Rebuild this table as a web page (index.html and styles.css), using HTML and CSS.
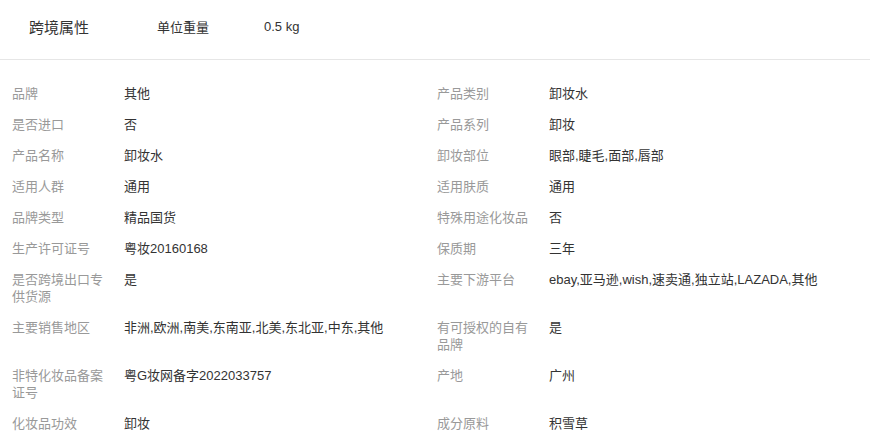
FILE: index.html
```html
<!DOCTYPE html>
<html lang="zh-CN">
<head>
  <meta charset="UTF-8">
  <meta name="viewport" content="width=device-width, initial-scale=1.0">
  <title>商品属性</title>
  <link rel="stylesheet" href="styles.css">
</head>
<body>
  <div class="crossBorder">
    <span class="crossTitle">跨境属性</span>
    <span class="crossLabel">单位重量</span>
    <span class="crossValue">0.5 kg</span>
  </div>

  <div class="attrGrid">
    <div class="attr"><span class="attrName">品牌</span><span class="attrValue">其他</span></div>
    <div class="attr"><span class="attrName">产品类别</span><span class="attrValue">卸妆水</span></div>

    <div class="attr"><span class="attrName">是否进口</span><span class="attrValue">否</span></div>
    <div class="attr"><span class="attrName">产品系列</span><span class="attrValue">卸妆</span></div>

    <div class="attr"><span class="attrName">产品名称</span><span class="attrValue">卸妆水</span></div>
    <div class="attr"><span class="attrName">卸妆部位</span><span class="attrValue">眼部,睫毛,面部,唇部</span></div>

    <div class="attr"><span class="attrName">适用人群</span><span class="attrValue">通用</span></div>
    <div class="attr"><span class="attrName">适用肤质</span><span class="attrValue">通用</span></div>

    <div class="attr"><span class="attrName">品牌类型</span><span class="attrValue">精品国货</span></div>
    <div class="attr"><span class="attrName">特殊用途化妆品</span><span class="attrValue">否</span></div>

    <div class="attr"><span class="attrName">生产许可证号</span><span class="attrValue">粤妆20160168</span></div>
    <div class="attr"><span class="attrName">保质期</span><span class="attrValue">三年</span></div>

    <div class="attr"><span class="attrName">是否跨境出口专供货源</span><span class="attrValue">是</span></div>
    <div class="attr"><span class="attrName">主要下游平台</span><span class="attrValue">ebay,亚马逊,wish,速卖通,独立站,LAZADA,其他</span></div>

    <div class="attr"><span class="attrName">主要销售地区</span><span class="attrValue">非洲,欧洲,南美,东南亚,北美,东北亚,中东,其他</span></div>
    <div class="attr"><span class="attrName">有可授权的自有品牌</span><span class="attrValue">是</span></div>

    <div class="attr"><span class="attrName">非特化妆品备案证号</span><span class="attrValue">粤G妆网备字2022033757</span></div>
    <div class="attr"><span class="attrName">产地</span><span class="attrValue">广州</span></div>

    <div class="attr"><span class="attrName">化妆品功效</span><span class="attrValue">卸妆</span></div>
    <div class="attr"><span class="attrName">成分原料</span><span class="attrValue">积雪草</span></div>
  </div>
</body>
</html>
```

FILE: styles.css
```css
body {
  margin: 0;
  font-family: "Liberation Sans", Arial, "Noto Sans CJK SC", sans-serif;
  font-size: 13px;
  color: #333;
  background-color: #fff;
}

.crossBorder {
  display: flex;
  align-items: center;
  height: 60px;
  padding: 0 0 6px 29px;
  border-bottom: 1px solid #e6e6e6;
  box-sizing: border-box;
}

.crossTitle {
  width: 128px;
  font-size: 15px;
}

.crossLabel {
  width: 107px;
}

.attrGrid {
  display: grid;
  grid-template-columns: 425px 1fr;
  padding-top: 18px;
}

.attr {
  display: flex;
  padding: 7px 0 7px 12px;
  line-height: 17px;
}

.attrName {
  flex: none;
  width: 94px;
  margin-right: 18px;
  color: #999;
}

.attrValue {
  color: #333;
}
```
